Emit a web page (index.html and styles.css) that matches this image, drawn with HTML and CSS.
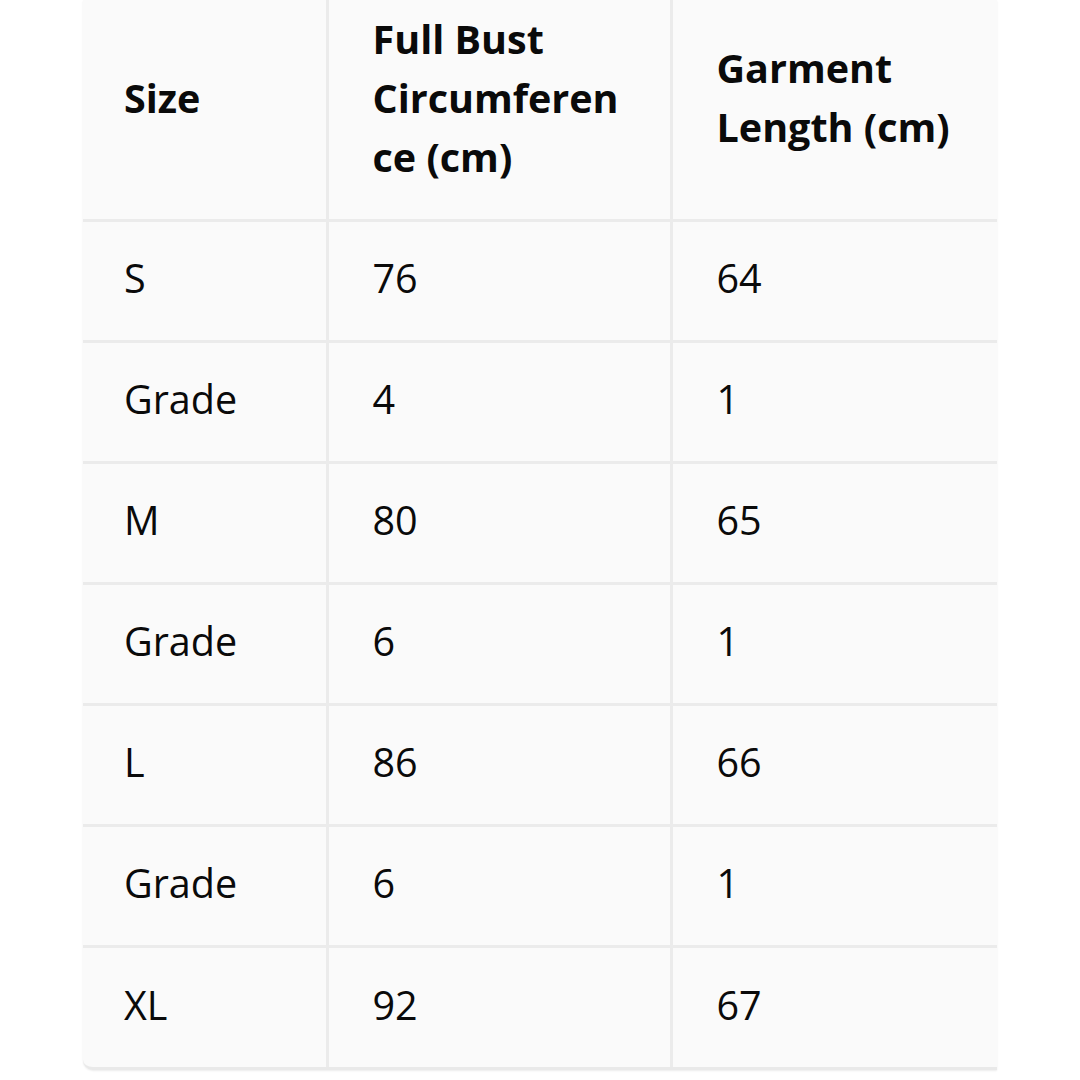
FILE: index.html
```html
<!DOCTYPE html>
<html>
<head>
<meta charset="utf-8">
<link rel="stylesheet" href="styles.css">
</head>
<body>
<div class="page">
  <div class="frame">
    <table class="sizes">
      <colgroup>
        <col class="c1"><col class="c2"><col class="c3">
      </colgroup>
      <thead>
        <tr>
          <th>Size</th>
          <th>Full Bust<br>Circumferen<br>ce (cm)</th>
          <th>Garment<br>Length (cm)</th>
        </tr>
      </thead>
      <tbody>
        <tr><td>S</td><td>76</td><td>64</td></tr>
        <tr><td>Grade</td><td>4</td><td>1</td></tr>
        <tr><td>M</td><td>80</td><td>65</td></tr>
        <tr><td>Grade</td><td>6</td><td>1</td></tr>
        <tr><td>L</td><td>86</td><td>66</td></tr>
        <tr><td>Grade</td><td>6</td><td>1</td></tr>
        <tr><td>XL</td><td>92</td><td>67</td></tr>
      </tbody>
    </table>
  </div>
</div>
</body>
</html>
```
FILE: styles.css
```css
html, body {
  margin: 0;
  padding: 0;
  background: #ffffff;
}
.page {
  width: 1080px;
  height: 1080px;
  overflow: hidden;
  padding-left: 83px;
  box-sizing: border-box;
}
.frame {
  width: 914px;
  overflow: hidden;
  background: #fafafa;
  border-bottom-left-radius: 10px;
  box-shadow: 0 1px 2px rgba(0,0,0,0.08);
  border-bottom: 3px solid #e9e9e9;
}
.sizes {
  table-layout: fixed;
  border-collapse: collapse;
  width: 914px;
  font-family: "Open Sans", "Noto Sans", sans-serif;
  color: #0a0a0a;
  font-size: 39.5px;
}
.c1 { width: 244px; }
.c2 { width: 344px; }
.c3 { width: 326px; }
.sizes th, .sizes td {
  text-align: left;
  vertical-align: middle;
  padding: 0 0 0 44px;
  border-left: 3px solid #ebebeb;
}
.sizes th:first-child, .sizes td:first-child {
  border-left: none;
  padding-left: 41px;
}
.sizes th {
  font-weight: 700;
  line-height: 59px;
  height: 220px;
  box-sizing: border-box;
  padding-bottom: 22px;
}
.sizes td {
  font-weight: 400;
  height: 121px;
  line-height: 56px;
  border-top: 3px solid #ebebeb;
  box-sizing: border-box;
  padding-bottom: 5px;
}
```
